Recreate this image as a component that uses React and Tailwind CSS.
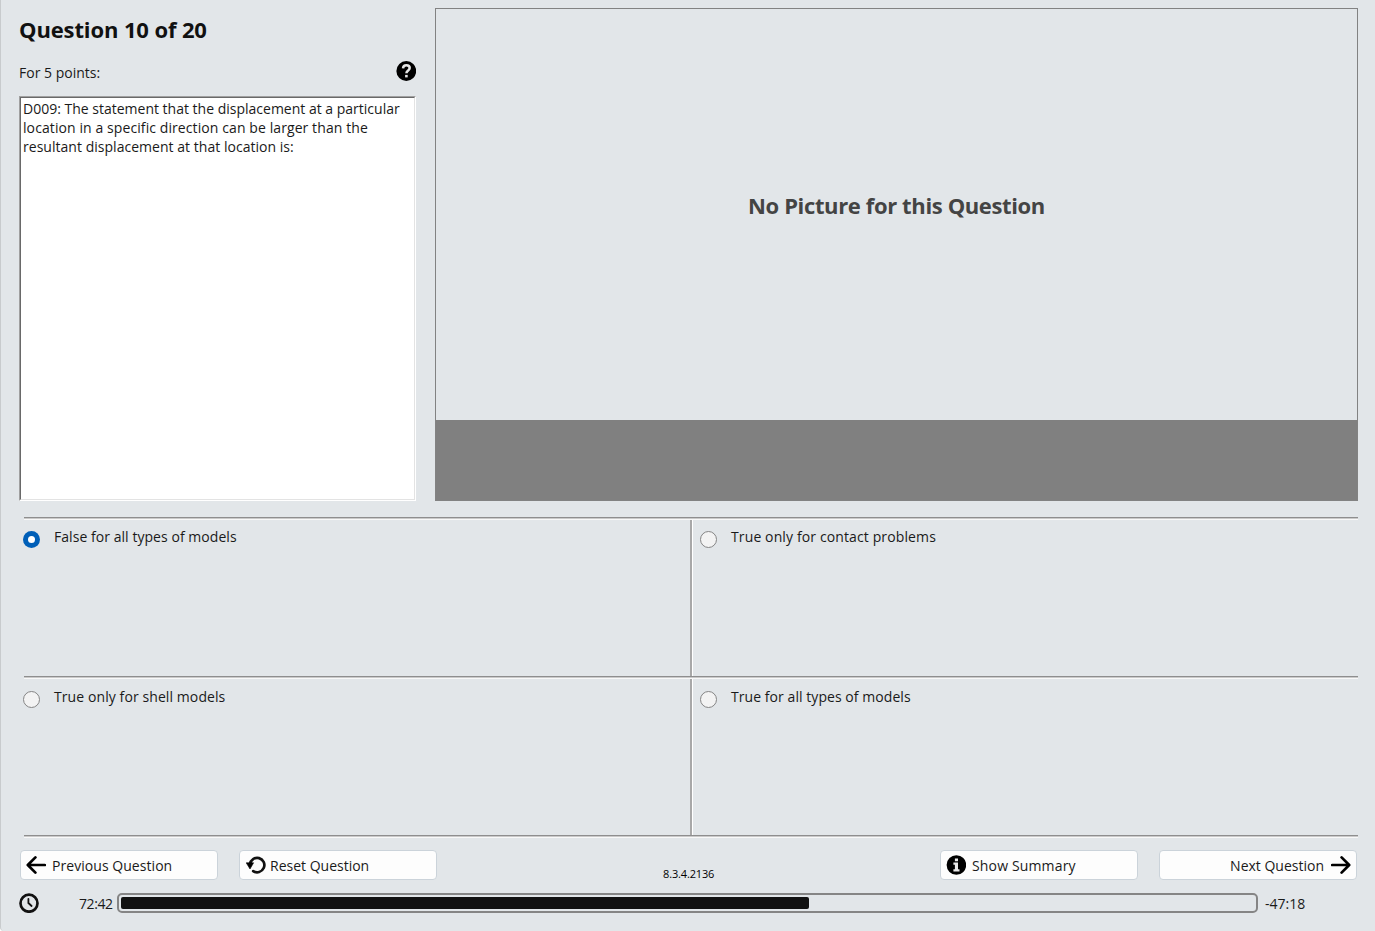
function HelpIcon() {
  return (
    <svg viewBox="0 0 20 20" className="mt-px h-5 w-5 shrink-0" fill="none">
      <circle cx="10.3" cy="10" r="9.9" fill="#000" />
      <path d="M7 7.4C7.1 5.4 8.6 4.3 10.4 4.3C12.4 4.3 13.7 5.4 13.7 7.1C13.7 9.6 10.4 9.3 10.4 12.3" stroke="#e6e6e6" strokeWidth="2.5" />
      <path d="M9.1 13.9H11.7V16.4H9.1Z" fill="#e6e6e6" />
    </svg>
  );
}

function InfoIcon() {
  return (
    <svg viewBox="0 0 20 20" className="ml-[5px] h-5 w-5 shrink-0">
      <circle cx="10.4" cy="10" r="9.8" fill="#000" />
      <path d="M8.9 3.4H12V6.2H8.9ZM7.4 7.6H12V14.3H13.5V16.4H7.4V14.3H8.9V9.7H7.4Z" fill="#e9e9e9" />
    </svg>
  );
}

function ArrowIcon({ className = "" }) {
  return (
    <svg viewBox="0 0 20 20" className={`h-5 w-5 shrink-0 ${className}`} fill="none" stroke="#000" strokeWidth="2.7" strokeLinecap="round" strokeLinejoin="round">
      <path d="M18.8 10H2M9.4 2.4L1.8 10L9.4 17.6" />
    </svg>
  );
}

function ResetIcon() {
  return (
    <svg viewBox="0 0 20 20" className="ml-[6px] h-5 w-5 shrink-0" fill="none">
      <path d="M4 9.2A7.2 7.2 0 1 1 7.2 16.1" stroke="#111" strokeWidth="2.7" strokeLinecap="round" />
      <path d="M0.2 7.8H7.6L4 14Z" fill="#000" stroke="#000" strokeWidth="0.6" strokeLinejoin="round" />
    </svg>
  );
}

function ClockIcon() {
  return (
    <svg viewBox="0 0 20 20" className="h-5 w-5 shrink-0" fill="none" stroke="#111" strokeLinecap="round">
      <circle cx="10" cy="10.2" r="8.5" strokeWidth="2.7" />
      <path d="M9.4 5.9V10L12.6 13" strokeWidth="1.8" />
    </svg>
  );
}

function Rule() {
  return (
    <div className="ml-6 h-[3px] w-[1334px] shrink-0 border-t border-[#8e8e8e] bg-[#f8f8f8]">
      <div className="h-px bg-[#c9c9c9]" />
    </div>
  );
}

function Answer({ checked = false, children, className = "" }) {
  return (
    <label className={`flex items-start ${className}`}>
      {checked ? (
        <span className="mt-[12px] flex h-[17px] w-[17px] items-center justify-center rounded-full bg-[#005fb8]">
          <span className="h-[7px] w-[7px] rounded-full bg-white" />
        </span>
      ) : (
        <span className="mt-[12px] h-[17px] w-[17px] rounded-full border border-[#858585] bg-[#f3f3f3]" />
      )}
      <span className="mt-[8px] ml-[14px] leading-5 whitespace-nowrap">{children}</span>
    </label>
  );
}

function Button({ children, className = "" }) {
  return (
    <button className={`flex h-[30px] w-[198px] items-center rounded-[4px] border border-[#cbd3da] bg-[#fdfdfd] whitespace-nowrap ${className}`}>
      {children}
    </button>
  );
}

export default function App() {
  return (
    <main className="flex h-[931px] w-[1375px] flex-col overflow-hidden rounded-bl-[4px] border-l border-[#c8cbcd] bg-[#e2e6e9] font-['Open_Sans',sans-serif] text-[14px] text-[#1a1a1a]">
      <div className="-ml-px flex h-[517px] shrink-0">
        <section className="ml-[19px] w-[397px]">
          <h1 className="mt-[14px] text-[22px] leading-[30px] font-bold tracking-[-0.12px] whitespace-nowrap text-[#111]"><span>Question 10 of 20</span></h1>
          <div className="mt-[16px] flex h-[22px] items-start justify-between">
            <span className="mt-[3px] leading-5">For 5 points:</span>
            <HelpIcon />
          </div>
          <div className="mt-[14px] h-[405px] border border-t-[#a0a0a0] border-r-white border-b-white border-l-[#a0a0a0]">
            <div className="flex h-full flex-col border border-t-[#696969] border-r-[#e3e3e3] border-b-[#e3e3e3] border-l-[#696969] bg-white pt-px pl-[2px] leading-[19px] whitespace-nowrap">
              <span className="self-start">D009: The statement that the displacement at a particular</span>
              <span className="self-start tracking-[0.09px]">location in a specific direction can be larger than the</span>
              <span className="self-start tracking-[0.03px]">resultant displacement at that location is:</span>
            </div>
          </div>
        </section>
        <section className="mt-[8px] ml-[19px] flex h-[493px] w-[923px] flex-col border border-[#828282]">
          <div className="flex flex-1 items-center justify-center pb-[18px] text-[22px] font-bold tracking-[-0.37px] text-[#444]"><span>No Picture for this Question</span></div>
          <div className="h-[80px] bg-[#808080]" />
        </section>
      </div>
      <div className="-ml-px flex flex-1 flex-col">
        <Rule />
        <div className="-mt-px ml-[23px] flex h-[157px]">
          <Answer checked className="w-[667px]"><span className="tracking-[0.05px]">False for all types of models</span></Answer>
          <div className="mt-px w-[3px] border-l-2 border-[#a8a8a8] bg-white" />
          <Answer className="ml-[7px]"><span className="tracking-[0.12px]">True only for contact problems</span></Answer>
        </div>
        <Rule />
        <div className="ml-[23px] flex h-[156px]">
          <Answer className="w-[667px]"><span className="tracking-[0.09px]">True only for shell models</span></Answer>
          <div className="w-[3px] border-l-2 border-[#a8a8a8] bg-white" />
          <Answer className="ml-[7px]"><span className="tracking-[0.06px]">True for all types of models</span></Answer>
        </div>
        <Rule />
        <div className="mt-[12px] ml-5 flex h-[30px] w-[1337px]">
          <Button><ArrowIcon className="ml-[5px]" /><span className="ml-[6px] tracking-[0.05px]">Previous Question</span></Button>
          <Button className="ml-[21px]"><ResetIcon /><span className="ml-[4px]">Reset Question</span></Button>
          <span className="mt-[15px] ml-[226px] w-[52px] text-[11px] leading-[18px] font-medium tracking-[-0.15px] whitespace-nowrap text-black"><span>8.3.4.2136</span></span>
          <Button className="ml-auto"><InfoIcon /><span className="ml-[6px] tracking-[0.15px]">Show Summary</span></Button>
          <Button className="ml-[21px] justify-end pr-[5px]"><span className="mr-[7px]">Next Question</span><ArrowIcon className="rotate-180" /></Button>
        </div>
        <div className="mt-[12px] ml-[19px] flex h-[22px] items-center">
          <ClockIcon />
          <span className="ml-10 w-[34px] tracking-[-0.4px]">72:42</span>
          <div className="ml-[4px] h-5 w-[1141px] rounded-[5px] border-2 border-[#858585] p-[2px]">
            <div className="h-[12px] w-[688px] rounded-[2px] bg-[#111]" />
          </div>
          <span className="ml-[7px]">-47:18</span>
        </div>
      </div>
    </main>
  );
}
